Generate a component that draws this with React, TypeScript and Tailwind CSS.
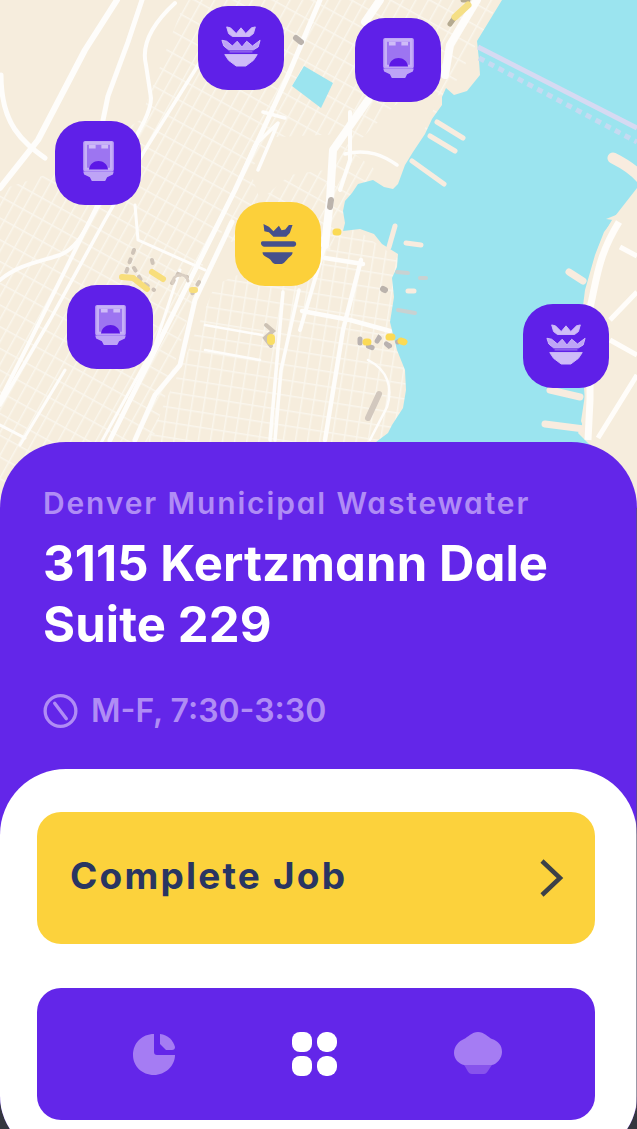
import React from "react";

type MarkerKind = "basket" | "bin";

function BasketIcon({ className }: { className: string }) {
  return (
    <svg viewBox="0 0 44 46" className={className} fill="currentColor" stroke="currentColor" strokeWidth="1" strokeLinejoin="round">
      <path d="M7 3 11 4 17 10 22 4 27 10 33 4 37 3 35 10 31 13H13L9 10Z" />
      <path d="M2 17 7 18 13 23 18 18 23 24 28 18 34 23 42 17 40 24 35 27H9L4 23Z" fillOpacity=".85" />
      <path d="M5 32h34l-4 6-8 6H17l-8-6Z" />
      <path d="M10 29h24" strokeWidth="2" strokeOpacity=".4" />
    </svg>
  );
}

function BeeIcon({ className }: { className: string }) {
  return (
    <svg viewBox="0 0 44 46" className={className} fill="currentColor">
      <path d="M6 1 12 4 17 9 23 3 26 8 30 7 34 2 38 2 35 11 31 15H17L12 10 7 9Z" />
      <path d="M5 20h34c4 0 4 6 0 6H7c-4 0-5-6-2-6Z" />
      <path d="M5 32h33c0 4-4 5-6 8-2 2-4 5-6 5h-7c-3 0-4-4-7-6-3-2-7-3-7-7Z" />
    </svg>
  );
}

function BinIcon({ className }: { className: string }) {
  return (
    <svg viewBox="0 0 36 46" className={className}>
      <path d="M4 3h28v29H4Z" fill="currentColor" fillOpacity=".55" />
      <path d="M4 4h28v28H4Z" fill="none" stroke="currentColor" strokeWidth="4" strokeLinejoin="round" strokeOpacity=".85" />
      <path d="M8 8h7M21 8h7" stroke="currentColor" strokeWidth="4" />
      <path d="M8 32c1-6 5-9 10-9s9 3 10 9Z" fill="#5c18e6" />
      <path d="M2 34h32l-1 3-6 3-2 4H11l-2-4-6-3Z" fill="currentColor" fillOpacity=".85" />
    </svg>
  );
}

function Marker({ kind, active, place }: { kind: MarkerKind; active?: boolean; place: string }) {
  return (
    <button
      aria-label={kind}
      className={`absolute flex h-[84px] w-[86px] items-center justify-center rounded-[30px] ${
        active ? "bg-[#fcd03a] text-[#46508c]" : "bg-[#5f20e8] pb-1 text-[#cfbcf8]"
      } ${place}`}
    >
      {active ? (
        <BeeIcon className="h-[44px] w-[40px]" />
      ) : kind === "basket" ? (
        <BasketIcon className="h-[44px] w-[42px]" />
      ) : (
        <BinIcon className="h-[44px] w-[35px]" />
      )}
    </button>
  );
}

function CityMap() {
  return (
    <svg viewBox="0 0 637 520" className="block h-[520px] w-[637px]">
      <defs>
        <pattern id="blocks" width="11" height="19" patternUnits="userSpaceOnUse" patternTransform="rotate(29)">
          <path d="M0 0H11M0 0V19" stroke="#faf6ed" strokeWidth="2.8" fill="none" />
        </pattern>
        <pattern id="lower" width="12" height="15" patternUnits="userSpaceOnUse" patternTransform="rotate(9)">
          <path d="M0 0H12M0 0V15" stroke="#faf6ed" strokeWidth="2.8" fill="none" />
        </pattern>
      </defs>
      <rect width="637" height="520" fill="#f6eddd" />
      <path d="M140 120 185 0H500L430 130 350 200 330 250 210 240 130 520H0V190L60 170Z" fill="url(#blocks)" />
      <path d="M215 285 350 225 400 260 410 400 380 520H110L180 370Z" fill="url(#lower)" />
      <path d="M275 137 345 134 325 170 290 175 260 200 250 170Z" fill="#f6eddd" />
      <path d="M395 105 440 95 415 150 395 185 350 150Z" fill="#f6eddd" />
      <path d="M205 260 228 222 205 300 190 340 180 370Z" fill="#f6eddd" />

      <g fill="none" stroke="#fefdfb" strokeLinecap="round" strokeLinejoin="round">
        <path d="M117 0 85 50 38 140 0 188" strokeWidth="6" />
        <path d="M142 0 128 42 108 96 102 125" strokeWidth="5" />
        <path d="M175 3C151 25 141 45 146 65L151 98C151 120 125 150 100 200L28 345 0 400" strokeWidth="4" />
        <path d="M1 75C1 125 23 142 45 158" strokeWidth="5" />
        <path d="M0 280C18 265 38 262 60 255 82 246 86 224 105 195L125 155" strokeWidth="4" />
        <path d="M200 62 145 150 105 220 50 320 0 405" strokeWidth="3.5" />
        <path d="M320 0 287 78 235 190 180 300 110 440" strokeWidth="5" />
        <path d="M232 222 195 300 180 365 155 395 135 440" strokeWidth="5" />
        <path d="M380 0 365 22M477 0 450 45 445 75" strokeWidth="8" />
        <path d="M368 100 333 150 330 200 325 245" strokeWidth="8" />
        <path d="M325 245 300 330" strokeWidth="4" />
        <path d="M350 112 350 160 340 190" strokeWidth="4" />
        <path d="M345 154C368 148 384 156 397 165M258 170 278 123 255 145 235 190M285 118 263 112" strokeWidth="3.5" />
        <path d="M283 292 270 440M299 290 281 370 275 440" strokeWidth="3.5" />
        <path d="M361 260 343 330 325 440M325 258 363 264M302 311 350 320 390 331" strokeWidth="4.5" />
        <path d="M135 205 138 240 205 270M180 270 155 345 75 490M65 370 20 445M0 425 25 438" strokeWidth="3" />
        <path d="M262 335 205 325M260 360 205 350M368 360C388 370 393 388 387 407L370 440" strokeWidth="2.5" />
      </g>

      <path
        fill="#9be4ef"
        d="M502 0 477 41 479 60 480 75 467 91 454 95 446 88 442 97 442 105 432 119 425 134 413 152 405 165 398 184 393 189 384 187 373 180 358 184 352 193 345 201 343 211 345 223 343 231 360 229 374 234 382 244 398 254 397 267 392 278 394 297 390 322 397 350 405 370 406 390 403 408 392 425 388 433 376 442 370 520H605L590 445 578 433 582 425 585 402 580 330 585 290 595 255 604 232 613 220 606 219 621 213 637 190V0Z"
      />
      <path d="M292 86 304 66 333 83 321 108Z" fill="#9be4ef" />
      <g fill="none" stroke="#f8ecdf" strokeLinecap="round" strokeLinejoin="round">
        <path d="M437 122 463 138M430 136 455 151M412 161 444 184" strokeWidth="5" />
        <path d="M395 226 389 247M406 243 421 245M408 291 414 291" strokeWidth="5" />
        <path d="M569 272 583 281M550 390 580 397M545 424 584 429" strokeWidth="7" />
        <path d="M613 158C627 165 637 172 643 181" strokeWidth="11" />
      </g>
      <path d="M612 220C591 255 590 280 583 310L585 395 581 421 590 445 605 520H637V188Z" fill="#f6eddd" />
      <path d="M619 222C598 256 597 278 590 308L590 400 588 440" fill="none" stroke="#fffdfa" strokeWidth="7" />
      <path d="M637 292 610 320M637 256 620 247M637 355 610 340M637 375 598 438" fill="none" stroke="#fffdfa" strokeWidth="5" />
      <g fill="none">
        <path d="M478 47 637 128" stroke="#d6daf2" strokeWidth="5" />
        <path d="M479 58 637 142" stroke="#c6daf1" strokeWidth="5" strokeDasharray="6 5" />
        <g strokeLinecap="round">
          <path d="M397 272 408 273M420 278 426 278M398 310 415 313" stroke="#c8d2d2" strokeWidth="4" />
          <path d="M296 38 301 42M331 200 330 207M383 289 385 290" stroke="#bbb3ac" strokeWidth="6" />
          <path d="M379 394 374 405 368 418" stroke="#d2c8be" strokeWidth="6" />
          <path d="M450 24 455 17M463 0 468 0" stroke="#b5aa90" strokeWidth="5" />
          <path d="M455 17 468 5" stroke="#f5df85" strokeWidth="7" />
          <path d="M134 250 130 261 126 273M134 268 142 282 154 290M152 260 154 269M172 283 178 274 187 277M199 282 192 294" stroke="#cfc4b8" strokeWidth="4" strokeDasharray="3 7" />
          <path d="M173 283C172 273 187 272 188 281" stroke="#dacfc3" strokeWidth="3" />
          <path d="M122 277 133 278 147 289M152 272 163 279M192 290 195 290" stroke="#f8de7c" strokeWidth="6" />
          <path d="M266 325 273 331 265 338 271 346" stroke="#cdc2b4" strokeWidth="4" />
          <path d="M271 338 271 341" stroke="#f9de66" strokeWidth="8" />
          <path d="M360 339 360 343 373 348 379 338 389 346 404 339" stroke="#b9b2b0" strokeWidth="5" strokeDasharray="4 9" />
          <path d="M366 342 368 342M389 337 392 337M401 341 404 342M336 232 338 232" stroke="#fbda55" strokeWidth="7" />
        </g>
      </g>
    </svg>
  );
}

function PieIcon() {
  return (
    <svg viewBox="0 0 42 42" className="h-[42px] w-[42px]" fill="#a57cf3">
      <path d="M21 1C9 1 0 10 0 22c0 11 9 20 21 20 11 0 21-9 21-20H24c-2 0-3-1-3-3Z" />
      <path d="M27 1c8 1 13 6 15 13 0 2-1 3-3 3h-6l-6-6Z" />
    </svg>
  );
}

function GridIcon() {
  return (
    <span className="grid grid-cols-2 gap-x-[5px] gap-y-[4px]">
      <i className="h-[20px] w-[20px] rounded-[8px] bg-white" />
      <i className="h-[20px] w-[20px] rounded-[9px] bg-white" />
      <i className="h-[20px] w-[20px] rounded-[8px] bg-white" />
      <i className="h-[20px] w-[20px] rounded-[9px] bg-white" />
    </span>
  );
}

function CloudIcon() {
  return (
    <svg viewBox="0 0 50 44" className="h-[44px] w-[50px]">
      <path d="M25 0c6 0 10 5 14 7 6 2 10 6 10 13 0 6-5 12-10 13H11C6 32 1 27 1 21 1 14 6 9 11 7c4-2 8-7 14-7Z" fill="#a57cf3" />
      <path d="M11 33h28c-3 4-5 9-8 9H19c-4 0-5-5-8-9Z" fill="#8753ec" />
    </svg>
  );
}

export default function App() {
  return (
    <main className="flex h-[1129px] w-[637px] flex-col overflow-hidden bg-[#34363f] font-['Inter','Open_Sans',sans-serif] [font-feature-settings:'cv11']">
      <section className="relative h-[442px] shrink-0">
        <CityMap />
        <Marker kind="basket" place="left-[198px] top-[6px]" />
        <Marker kind="bin" place="left-[355px] top-[18px]" />
        <Marker kind="bin" place="left-[55px] top-[121px]" />
        <Marker kind="basket" active place="left-[235px] top-[202px]" />
        <Marker kind="bin" place="left-[67px] top-[285px]" />
        <Marker kind="basket" place="left-[523px] top-[304px]" />
      </section>
      <section className="relative flex h-[714px] shrink-0 flex-col rounded-t-[66px] rounded-b-[60px] bg-[#6326e9]">
        <div className="flex h-[327px] shrink-0 flex-col pt-[42px] pl-[43px] whitespace-nowrap">
          <p className="text-[30px] leading-[38px] font-semibold tracking-[1.85px] text-[#b08cf5]">
            Denver Municipal Wastewater
          </p>
          <h1 className="mt-[11px] text-[49px] leading-[61px] font-bold tracking-[0.1px] text-white">
            3115 Kertzmann Dale
            <br />
            Suite 229
          </h1>
          <div className="mt-[36px] flex items-center gap-[13px] text-[#b08cf5]">
            <svg viewBox="0 0 36 36" className="h-[36px] w-[35px]" fill="none" stroke="currentColor" strokeWidth="3.4">
              <circle cx="18" cy="18" r="15.8" />
              <path d="M12 10 24 26" strokeLinecap="round" />
            </svg>
            <span className="text-[32px] leading-[40px] font-semibold">M-F, 7:30-3:30</span>
          </div>
        </div>
        <div className="flex grow flex-col gap-[44px] rounded-t-[66px] rounded-b-[60px] bg-white pt-[43px] pl-[37px]">
          <button className="flex h-[132px] w-[558px] items-center justify-between rounded-[24px] bg-[#fcd23c] pr-[31px] pl-[33px] text-[#293562]">
            <span className="pb-[4px] text-[37px] leading-[44px] font-bold tracking-[2.2px] whitespace-nowrap">
              Complete Job
            </span>
            <svg viewBox="0 0 24 38" className="h-[38px] w-[24px]" fill="none" stroke="#3c4148" strokeWidth="4.5">
              <path d="M2 2 20 19 2 36" />
            </svg>
          </button>
          <nav className="flex h-[132px] w-[558px] items-center justify-between rounded-[24px] bg-[#6326e9] pr-[92px] pl-[96px]">
            <PieIcon />
            <GridIcon />
            <CloudIcon />
          </nav>
        </div>
        <div className="absolute top-[66px] right-0 h-[600px] w-px bg-[#59536d]/60" />
      </section>
    </main>
  );
}
